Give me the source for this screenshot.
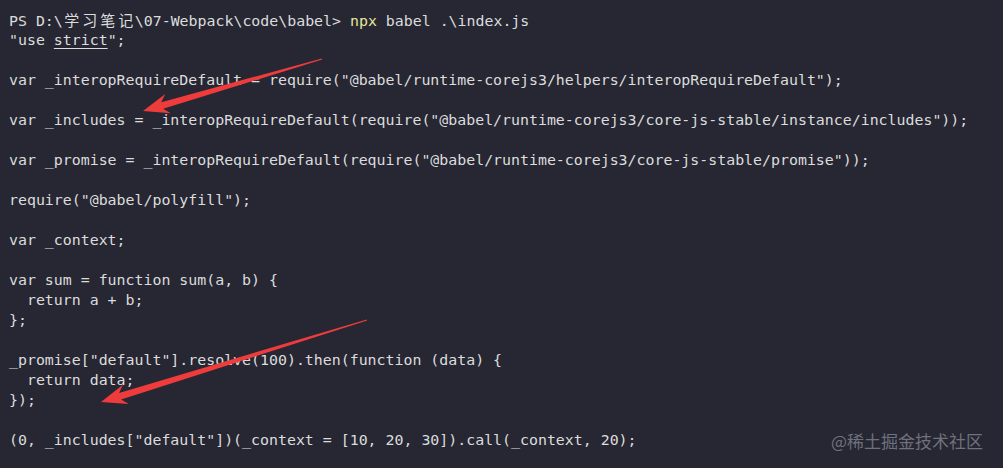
import React from 'react';

const LINES = [
  '',
  'var _interopRequireDefault = require("@babel/runtime-corejs3/helpers/interopRequireDefault");',
  '',
  'var _includes = _interopRequireDefault(require("@babel/runtime-corejs3/core-js-stable/instance/includes"));',
  '',
  'var _promise = _interopRequireDefault(require("@babel/runtime-corejs3/core-js-stable/promise"));',
  '',
  'require("@babel/polyfill");',
  '',
  'var _context;',
  '',
  'var sum = function sum(a, b) {',
  '  return a + b;',
  '};',
  '',
  '_promise["default"].resolve(100).then(function (data) {',
  '  return data;',
  '});',
  '',
  '(0, _includes["default"])(_context = [10, 20, 30]).call(_context, 20);',
];

// tapered arrow polygon, thin at the tail, triangle head at the tip
function arrowPoints(x1, y1, x2, y2) {
  const dx = x2 - x1;
  const dy = y2 - y1;
  const len = Math.hypot(dx, dy);
  const ux = dx / len;
  const uy = dy / len;
  const nx = -uy;
  const ny = ux;
  const headLen = 26;
  const headW = 10;
  const neckW = 3.4;
  const bx = x2 - ux * headLen;
  const by = y2 - uy * headLen;
  const cx = x2 - ux * (headLen - 6);
  const cy = y2 - uy * (headLen - 6);
  const pts = [
    [x1 + nx * 0.6, y1 + ny * 0.6],
    [cx + nx * neckW, cy + ny * neckW],
    [bx + nx * headW, by + ny * headW],
    [x2, y2],
    [bx - nx * headW, by - ny * headW],
    [cx - nx * neckW, cy - ny * neckW],
    [x1 - nx * 0.6, y1 - ny * 0.6],
  ];
  return pts.map((p) => p.map((v) => v.toFixed(1)).join(',')).join(' ');
}

function Cjk({ children }) {
  return (
    <>
      {children.split('').map((c, i) => (
        <span
          key={i}
          className="inline-block w-[18px] text-center font-['Noto_Sans_CJK_SC',sans-serif] text-[15px]"
        >
          {c}
        </span>
      ))}
    </>
  );
}

export default function App() {
  return (
    <div className="relative w-[1003px] h-[468px] overflow-hidden bg-[#262733]">
      <div className="pt-[10px] pl-[9px] font-['DejaVu_Sans_Mono',monospace] text-[14.9px] leading-[20px] text-[#dcdcdc] whitespace-pre">
        <div className="h-[20px]">
          PS D:\<Cjk>学习笔记</Cjk>\07-Webpack\code\babel&gt; <span className="text-[#e6e69c]">npx</span> babel .\index.js
        </div>
        <div className="h-[20px]">
          "use <span className="underline underline-offset-[3px] decoration-1">strict</span>";
        </div>
        {LINES.map((l, i) => (
          <div key={i} className="h-[20px]">
            {l}
          </div>
        ))}
      </div>

      {/* annotation arrows */}
      <svg className="absolute inset-0 pointer-events-none" width="1003" height="468">
        <polygon points={arrowPoints(322, 59, 143, 111)} fill="#ee3b3b" />
        <polygon points={arrowPoints(367, 320, 101, 402)} fill="#ee3b3b" />
      </svg>

      {/* watermark */}
      <div className="absolute right-[20px] bottom-[19px] font-['Noto_Sans_CJK_SC',sans-serif] text-[17px] leading-none text-[#6f717c]">
        @稀土掘金技术社区
      </div>
    </div>
  );
}
